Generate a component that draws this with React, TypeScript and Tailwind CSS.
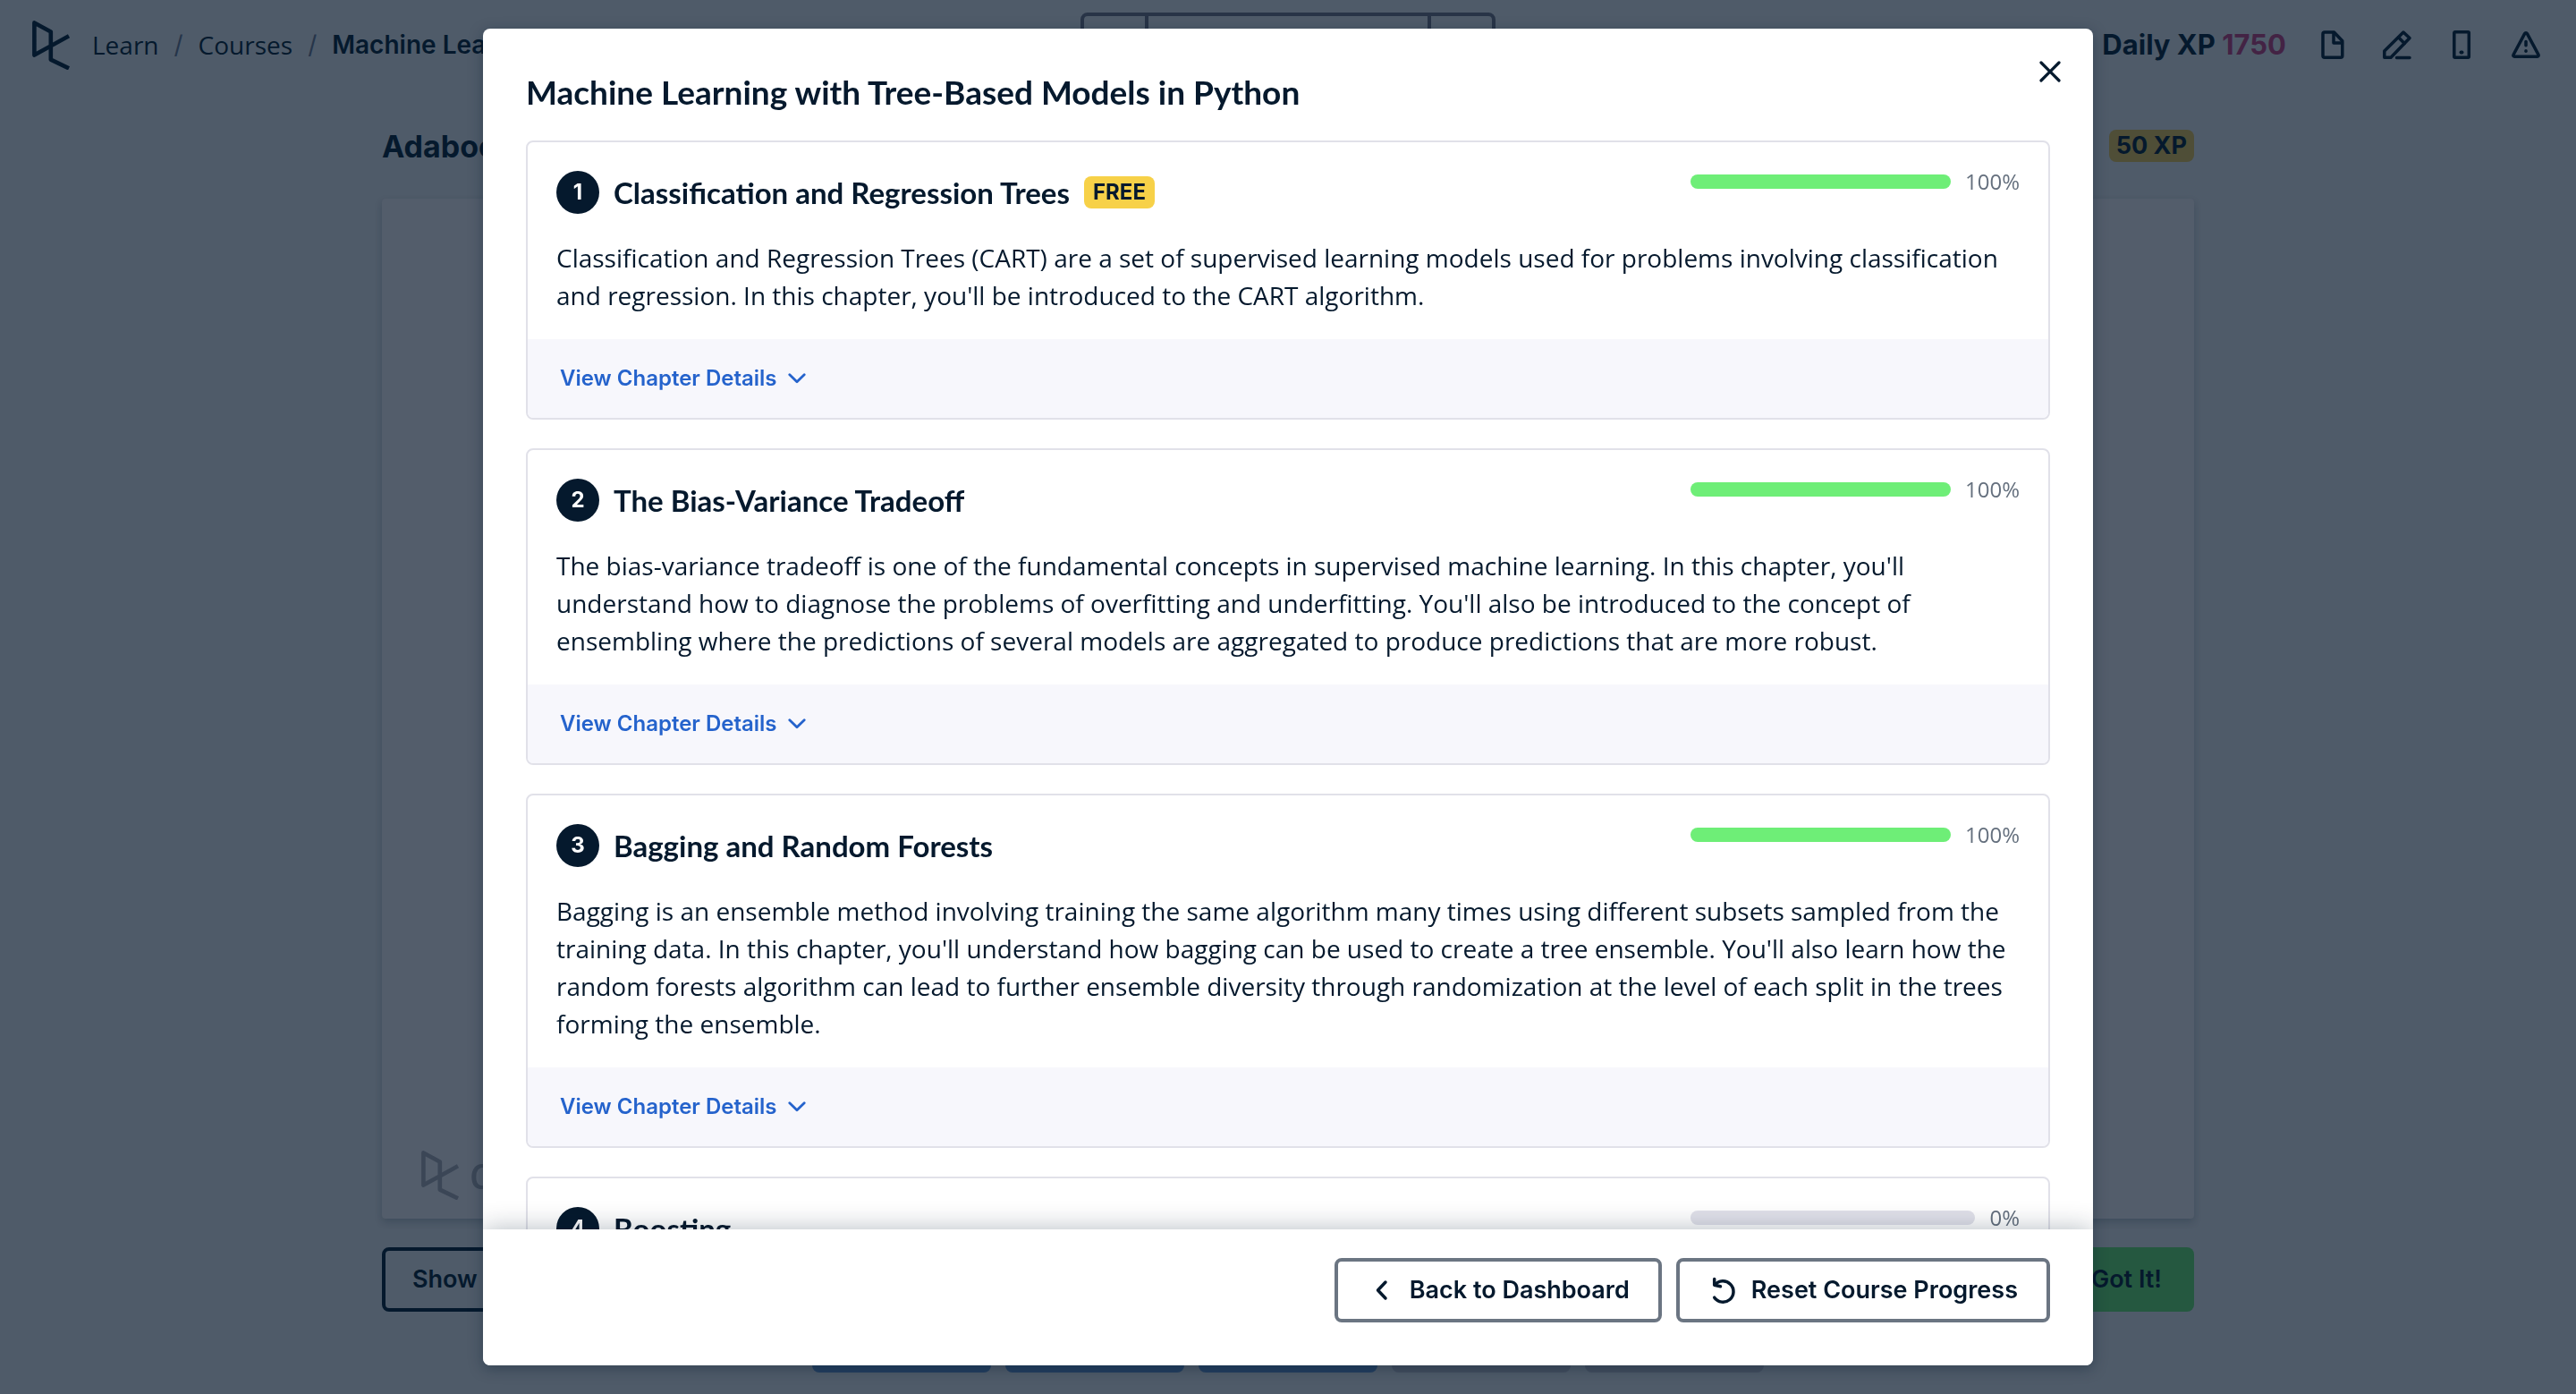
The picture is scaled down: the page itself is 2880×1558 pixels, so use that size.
import type { ReactNode } from 'react';

type Chapter = { title: string; free?: boolean; progress: number; text?: string };

const chapters: Chapter[] = [
  {
    title: 'Classification and Regression Trees',
    free: true,
    progress: 100,
    text: "Classification and Regression Trees (CART) are a set of supervised learning models used for problems involving classification and regression. In this chapter, you'll be introduced to the CART algorithm.",
  },
  {
    title: 'The Bias-Variance Tradeoff',
    progress: 100,
    text: "The bias-variance tradeoff is one of the fundamental concepts in supervised machine learning. In this chapter, you'll understand how to diagnose the problems of overfitting and underfitting. You'll also be introduced to the concept of ensembling where the predictions of several models are aggregated to produce predictions that are more robust.",
  },
  {
    title: 'Bagging and Random Forests',
    progress: 100,
    text: "Bagging is an ensemble method involving training the same algorithm many times using different subsets sampled from the training data. In this chapter, you'll understand how bagging can be used to create a tree ensemble. You'll also learn how the random forests algorithm can lead to further ensemble diversity through randomization at the level of each split in the trees forming the ensemble.",
  },
  { title: 'Boosting', progress: 0 },
];

function Logo({ className }: { className: string }) {
  return (
    <svg viewBox="0 0 42 55" className={className} fill="none" stroke="currentColor" strokeWidth="4.6" strokeLinejoin="round" aria-hidden="true">
      <path d="M41 17.2 2.4 38.6V2.4l18.4 10v31.2L41 53.4" />
    </svg>
  );
}

function Icon({ children }: { children: ReactNode }) {
  return (
    <svg viewBox="0 0 36 36" className="size-9" fill="none" stroke="currentColor" strokeWidth="3.5" strokeLinecap="round" strokeLinejoin="round" aria-hidden="true">
      {children}
    </svg>
  );
}

function ToolButton({ label, children }: { label: string; children: ReactNode }) {
  return (
    <button type="button" aria-label={label} className="flex h-[72px] w-[72px] items-center justify-center">
      <Icon>{children}</Icon>
    </button>
  );
}

function Header() {
  return (
    <header className="grid h-[100px] grid-cols-[1fr_auto_1fr] items-center px-5">
      <nav aria-label="Breadcrumb" className="flex min-w-0 items-center gap-[17px] pl-4 text-[28px] leading-[42px] whitespace-nowrap">
        <a href="#home" aria-label="Home" className="mr-2 shrink-0">
          <Logo className="h-[55px] w-[42px]" />
        </a>
        <a href="#learn" className="font-['Open_Sans',sans-serif]">Learn</a>
        <span className="text-[#26354a]">/</span>
        <a href="#courses" className="font-['Open_Sans',sans-serif]">Courses</a>
        <span className="text-[#26354a]">/</span>
        <a href="#course" className="font-semibold">Machine Learning with Tree-Based Models in Python</a>
      </nav>
      <div className="flex h-[72px] w-[464px] rounded-lg border-4 border-[#283447] text-[#283447]">
        <button type="button" aria-label="Previous" className="w-[72px] border-r-4 border-[#283447]" />
        <button type="button" aria-label="Course Outline" className="flex-1" />
        <button type="button" aria-label="Next" className="w-[72px] border-l-4 border-[#283447]" />
      </div>
      <div className="flex items-center justify-end">
        <p className="mr-4 text-[31px] leading-[48px] font-bold whitespace-nowrap">
          Daily XP <span className="text-[#432344]">1750</span>
        </p>
        <ToolButton label="Slides">
          <path d="M9 4h10.5l9.3 9.8V30.200a2 2 0 0 1-2 2H9a2 2 0 0 1-2-2V6a2 2 0 0 1 2-2z" />
          <path d="M19 4.500v11.500h9.500" />
        </ToolButton>
        <ToolButton label="Notes">
          <path d="M3.800 32.200V25L25 4l7 6.500L11 32.200z" />
          <path d="m19.500 9.800 6.700 6.700M17.500 32.500H32" />
        </ToolButton>
        <ToolButton label="Mobile">
          <rect x="9.800" y="3.800" width="16.500" height="28.500" rx="1" />
          <path d="M17.500 26.600h1" strokeWidth="4" />
        </ToolButton>
        <ToolButton label="Report an issue">
          <path d="M16.600 5.600 4 29.200c-.6 1.100.2 2 1.200 2h25.600c1 0 1.800-.9 1.200-2L19.400 5.600c-.6-1.100-2.200-1.100-2.800 0z" />
          <path d="M18 14.500v4.200" />
          <path d="M18 24.800v.4" />
        </ToolButton>
      </div>
    </header>
  );
}

function Exercise() {
  return (
    <main className="mx-auto flex min-h-0 w-full max-w-[2026px] flex-1 flex-col pb-6">
      <div className="mt-9 mb-8 flex h-[54px] items-center justify-between">
        <h1 className="text-[34px] font-bold">Adaboost</h1>
        <span className="rounded-lg bg-[#4f4e37] px-2 text-[27px] leading-9 font-bold">50 XP</span>
      </div>
      <section className="flex flex-1 items-end rounded-sm bg-[#535d6b] pb-[21px] pl-11 text-[#3b4656] shadow-[0_4px_8px_rgba(5,25,45,0.2)]">
        <div className="flex items-end gap-3">
          <Logo className="h-[55px] w-[42px]" />
          <span className="font-['Lato',sans-serif] text-[54px] leading-[64px]">datacamp</span>
        </div>
      </section>
      <div className="mt-8 flex justify-between">
        <button type="button" className="h-[72px] rounded-lg border-4 border-[#05192d] px-[30px] text-[27px] font-semibold">Show Answer</button>
        <button type="button" className="h-[72px] rounded-lg bg-[#255840] px-9 text-[27px] font-semibold">Got It!</button>
      </div>
      <div className="mt-[52px] flex justify-center gap-4">
        {[true, true, true, false, false].map((done, i) => (
          <span key={i} className={done ? 'h-4 w-[200px] rounded-lg bg-[#243f5f]' : 'h-4 w-[200px] rounded-lg bg-[#434e5e]'} />
        ))}
      </div>
    </main>
  );
}

function ChapterCard({ chapter, index }: { chapter: Chapter; index: number }) {
  return (
    <article className="shrink-0 overflow-hidden rounded-lg border-2 border-[#e1e1e9]">
      <div className="px-8 pt-8 pb-7">
        <div className="flex items-start justify-between">
          <div className="flex items-center gap-4">
            <span className="flex size-12 items-center justify-center rounded-full bg-[#05192d] text-2xl font-bold text-white">{index}</span>
            <h3 className="font-['Lato',sans-serif] text-[33px] leading-[46px] font-bold">{chapter.title}</h3>
            {chapter.free && <span className="rounded-lg bg-[#f7d148] px-[10px] text-2xl leading-9 font-bold">FREE</span>}
          </div>
          <div className="flex w-[368px] items-center gap-4">
            <div role="progressbar" aria-label={chapter.title} aria-valuenow={chapter.progress} className="h-4 flex-1 overflow-hidden rounded-full bg-[#e1e1ea]">
              <div className="h-full bg-[#6eee77]" style={{ width: `${chapter.progress}%` }} />
            </div>
            <span className="font-['Open_Sans',sans-serif] text-2xl leading-6 text-[#65707e]">{chapter.progress}%</span>
          </div>
        </div>
        {chapter.text && <p className="mt-7 font-['Open_Sans',sans-serif] text-[28px] leading-[42px]">{chapter.text}</p>}
      </div>
      <div className="flex h-[88px] items-center bg-[#f7f7fc] px-9">
        <button type="button" className="flex items-center gap-3 text-2xl font-semibold text-[#2563cc]">
          View Chapter Details
          <svg viewBox="0 0 20 12" className="h-3 w-5" fill="none" stroke="currentColor" strokeWidth="2.8" strokeLinecap="round" strokeLinejoin="round" aria-hidden="true">
            <path d="m1.800 1.800 8.200 8 8.200-8" />
          </svg>
        </button>
      </div>
    </article>
  );
}

function OutlineDialog() {
  return (
    <div className="fixed inset-0 flex justify-center py-8">
      <section role="dialog" aria-modal="true" aria-labelledby="outline-title" className="relative flex w-full max-w-[1800px] flex-col overflow-hidden rounded-lg bg-white shadow-[0_4px_16px_rgba(5,25,45,0.35)]">
        <div className="flex min-h-0 flex-1 flex-col gap-8 overflow-y-auto px-12 pt-12 [scrollbar-width:none]">
          <h2 id="outline-title" className="font-['Lato',sans-serif] text-[37px] leading-[45px] font-bold">
            Machine Learning with Tree-Based Models in Python
          </h2>
          {chapters.map((chapter, i) => (
            <ChapterCard key={chapter.title} chapter={chapter} index={i + 1} />
          ))}
        </div>
        <button type="button" aria-label="Close" className="absolute top-6 right-6 flex size-12 items-center justify-center">
          <svg viewBox="0 0 24 24" className="size-6" fill="none" stroke="currentColor" strokeWidth="3.2" strokeLinecap="round" aria-hidden="true">
            <path d="m2 2 20 20M22 2 2 22" />
          </svg>
        </button>
        <footer className="relative flex justify-end gap-4 bg-white px-12 pt-8 pb-12 shadow-[0_0_28px_rgba(5,25,45,0.3)]">
          <button type="button" className="flex h-[72px] items-center gap-3 rounded-lg border-4 border-[#6b7582] px-8 text-[27px] font-semibold">
            <Icon>
              <path d="M21 9 12.500 18 21 27" />
            </Icon>
            Back to Dashboard
          </button>
          <button type="button" className="flex h-[72px] items-center gap-3 rounded-lg border-4 border-[#6b7582] px-8 text-[27px] font-semibold">
            <Icon>
              <path d="M6.700 26.200A11.700 11.700 0 1 0 7.200 12.200" />
              <path d="M6.700 5.600v6.600l6.800 1.600" />
            </Icon>
            Reset Course Progress
          </button>
        </footer>
      </section>
    </div>
  );
}

export default function App() {
  return (
    <div className="flex h-screen flex-col overflow-hidden bg-[#4f5b69] font-['Inter',sans-serif] text-[#05192d]">
      <Header />
      <Exercise />
      <OutlineDialog />
    </div>
  );
}
